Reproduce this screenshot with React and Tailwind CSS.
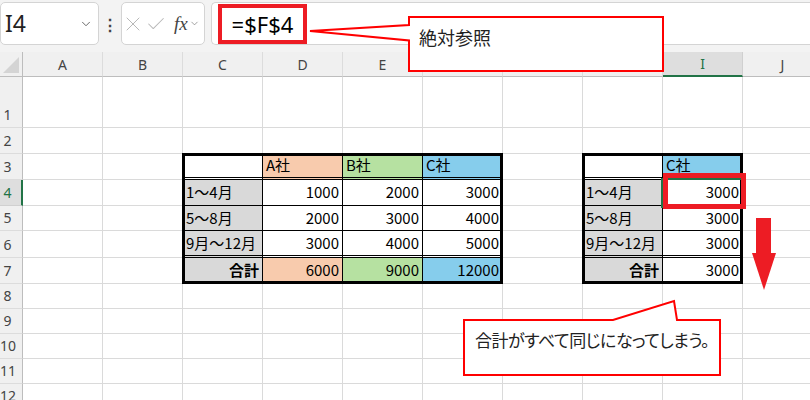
import React from "react";
import { X, Check, ChevronDown } from "lucide-react";

const COLS = ["A", "B", "C", "D", "E", "F", "G", "H", "I", "J"];
const ROWS = [1, 2, 3, 4, 5, 6, 7, 8, 9, 10, 11, 12];

const PEACH = "bg-[#f8cbad]";
const GREEN = "bg-[#b6e1a1]";
const BLUE = "bg-[#86cdec]";
const GRAY = "bg-[#d9d9d9]";

// sheet cells: text, background, alignment, border kind
const CELLS = {
  C3: { bg: "bg-white", b: "dbl" },
  D3: { t: "A社", bg: PEACH, b: "dbl" },
  E3: { t: "B社", bg: GREEN, b: "dbl" },
  F3: { t: "C社", bg: BLUE, b: "dbl" },
  C4: { t: "1～4月", bg: GRAY },
  D4: { t: "1000", r: true },
  E4: { t: "2000", r: true },
  F4: { t: "3000", r: true },
  C5: { t: "5～8月", bg: GRAY },
  D5: { t: "2000", r: true },
  E5: { t: "3000", r: true },
  F5: { t: "4000", r: true },
  C6: { t: "9月～12月", bg: GRAY, b: "dbl" },
  D6: { t: "3000", r: true, b: "dbl" },
  E6: { t: "4000", r: true, b: "dbl" },
  F6: { t: "5000", r: true, b: "dbl" },
  C7: { t: "合計", bg: GRAY, r: true, bold: true },
  D7: { t: "6000", bg: PEACH, r: true },
  E7: { t: "9000", bg: GREEN, r: true },
  F7: { t: "12000", bg: BLUE, r: true },

  H3: { bg: "bg-white", b: "dbl" },
  I3: { t: "C社", bg: BLUE, b: "dbl" },
  H4: { t: "1～4月", bg: GRAY },
  I4: { t: "3000", r: true },
  H5: { t: "5～8月", bg: GRAY },
  I5: { t: "3000", r: true },
  H6: { t: "9月～12月", bg: GRAY, b: "dbl" },
  I6: { t: "3000", r: true, b: "dbl" },
  H7: { t: "合計", bg: GRAY, r: true, bold: true },
  I7: { t: "3000", r: true },
};

function Cell({ id }) {
  const c = CELLS[id];
  if (!c) {
    return <div className="border-r border-b border-[#dadada] bg-white" />;
  }
  const border =
    c.b === "dbl"
      ? "border-r border-b-[3px] border-double border-black"
      : "border-r border-b border-black";
  return (
    <div
      className={`relative flex items-center overflow-visible whitespace-nowrap text-[15px] text-black ${border} ${c.bg || "bg-white"} ${
        c.r ? "justify-end pr-[3px]" : "justify-start pl-[3px]"
      } ${c.bold ? "font-bold" : ""}`}
    >
      {c.t}
      {id === "C3" && (
        <div className="absolute -left-px -top-px w-[321px] h-[131px] border-[3px] border-black z-10 pointer-events-none" />
      )}
      {id === "H3" && (
        <div className="absolute -left-px -top-px w-[161px] h-[131px] border-[3px] border-black z-10 pointer-events-none" />
      )}
      {id === "I4" && (
        <>
          <div className="absolute left-[-2px] top-[-2px] w-[84px] h-[30px] border-2 border-[#217346] z-20 pointer-events-none" />
          <div className="absolute left-0 top-[-7px] w-[83px] h-[36px] border-[5px] border-[#ed1c24] z-20 pointer-events-none" />
        </>
      )}
    </div>
  );
}

export default function App() {
  return (
    <div className="relative w-[810px] h-[400px] overflow-hidden bg-white font-['Noto_Sans_CJK_JP','Noto_Sans',sans-serif]">
      {/* Formula bar */}
      <div className="h-[52px] bg-[#f3f3f3] flex items-start pt-[2px] gap-0">
        <div className="w-[99px] h-[43px] bg-white border border-[#d4d4d4] rounded-[5px] flex items-center justify-between pl-[4px] pr-[5px] shrink-0">
          <span className="text-[23px] font-normal text-[#222] font-['Noto_Sans',sans-serif]">I4</span>
          <ChevronDown size={14} strokeWidth={1.5} className="text-[#555]" />
        </div>
        <div className="w-[22px] h-[43px] flex items-center justify-center text-[#444] text-[16px] font-bold shrink-0">⋮</div>
        <div className="w-[84px] h-[43px] bg-white border border-[#d4d4d4] rounded-[5px] flex items-center shrink-0">
          <X size={24} strokeWidth={1} className="text-[#b8b8b8] -ml-px" />
          <Check size={22} strokeWidth={1.1} className="text-[#b8b8b8]" />
          <span className="flex items-center ml-[7px]">
            <span className="italic text-[19px] text-[#444] font-['Liberation_Serif',serif] leading-none">fx</span>
            <ChevronDown size={11} strokeWidth={1.5} className="text-[#777] ml-px" />
          </span>
        </div>
        <div className="ml-[6px] flex-1 h-[43px] bg-white border border-[#d4d4d4] rounded-l-[5px] border-r-0 flex items-start pl-[6px] pt-px">
          <div className="w-[89px] h-[40px] border-[4px] border-[#ed1c24] flex items-center justify-center text-[22px] font-normal text-black font-['Noto_Sans',sans-serif]">
            =$F$4
          </div>
        </div>
      </div>

      {/* Sheet grid */}
      <div className="grid grid-cols-[23px_repeat(10,80px)] grid-rows-[25px_51px_26px_26px_26px_25px_27px_26px_25px_25px_25px_25px_25px] w-[823px]">
        <div className="relative bg-[#f0f0f0] border-r border-b border-[#bdbdbd]">
          <div className="absolute right-[3px] bottom-[3px] w-0 h-0 border-l-[16px] border-l-transparent border-b-[16px] border-b-[#d4d4d4]" />
        </div>
        {COLS.map((c) =>
          c === "I" ? (
            <div
              key={c}
              className="bg-[#dedede] border-r border-[#d0d0d0] border-b-2 border-b-[#217346] flex items-center justify-center text-[14px] text-[#217346] font-['Noto_Sans',sans-serif]"
            >
              {c}
            </div>
          ) : (
            <div
              key={c}
              className="bg-[#f0f0f0] border-r border-[#dcdcdc] border-b border-b-[#bdbdbd] flex items-center justify-center text-[14px] text-[#444] font-['Noto_Sans',sans-serif]"
            >
              {c}
            </div>
          )
        )}
        {ROWS.map((r) => (
          <React.Fragment key={r}>
            {r === 4 ? (
              <div className="bg-[#dedede] border-r-2 border-r-[#217346] border-b border-b-[#d0d0d0] flex items-end pb-[2px] text-[14px] text-[#217346] font-['Noto_Sans',sans-serif]">
                <span className="w-[15px] text-center">{r}</span>
              </div>
            ) : (
              <div className="bg-[#f0f0f0] border-r border-r-[#bdbdbd] border-b border-b-[#dcdcdc] flex items-end pb-[2px] text-[14px] text-[#444] font-['Noto_Sans',sans-serif]">
                <span className="w-[15px] text-center">{r}</span>
              </div>
            )}
            {COLS.map((c) => (
              <Cell key={c + r} id={c + r} />
            ))}
          </React.Fragment>
        ))}
      </div>

      {/* Callouts */}
      <svg className="absolute left-0 top-0 z-30 pointer-events-none" width="810" height="400">
        <polygon
          points="409,17 663,17 663,71 409,71 409,40.5 310,31 409,25"
          fill="white"
          stroke="#ff0000"
          strokeWidth="2"
        />
        <polygon
          points="464,320 613,320 674,301 677,320 720,320 720,375 464,375"
          fill="white"
          stroke="#ff0000"
          strokeWidth="2"
        />
        <rect x="756" y="218" width="15" height="36" fill="#ed1c24" />
        <polygon points="752,253 776,253 764,290" fill="#ed1c24" />
      </svg>
      <div className="absolute left-[419px] top-[25px] z-40 text-[18px] leading-[24px] text-[#222]">絶対参照</div>
      <div className="absolute left-[475px] top-[328px] z-40 text-[17px] leading-[24px] tracking-[-0.5px] text-[#222] [font-feature-settings:'palt']">
        合計がすべて同じになってしまう。
      </div>
    </div>
  );
}
